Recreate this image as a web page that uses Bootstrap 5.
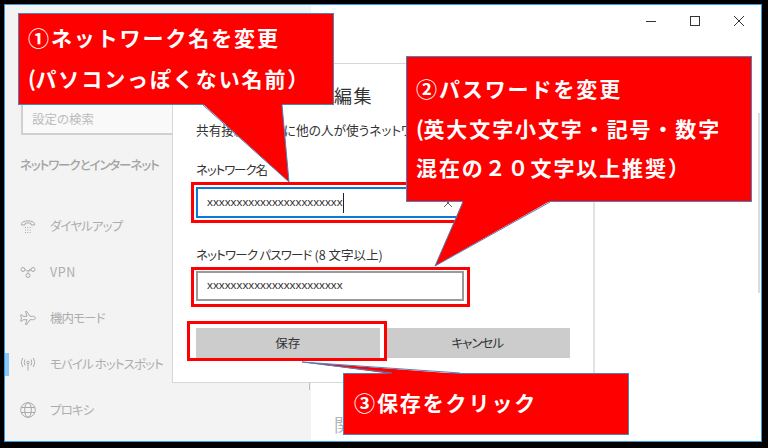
<!DOCTYPE html>
<html lang="ja">
<head>
<meta charset="utf-8">
<title>ネットワーク情報の編集</title>
<link href="https://cdn.jsdelivr.net/npm/bootstrap@5.3.0/dist/css/bootstrap.min.css" rel="stylesheet">
<style>
html,body{margin:0;background:#000;overflow:hidden}
body{font-family:"Noto Sans CJK JP","Liberation Sans",sans-serif;font-feature-settings:"palt";width:768px;height:448px}
.stage{position:relative;width:768px;height:448px;background:#000;overflow:hidden;padding:4px 6px 6px 4px}
.appwin{position:relative;width:758px;height:438px;border:1px solid #3d9be6;background:#fff;display:flex}
.side{width:306px;background:#f3f3f3;padding-top:98px;color:#adadad;font-size:12.5px}
.searchbox{margin-left:16px;width:200px;height:32px;border:2px solid #d0d0d0;background:#f9f9f9;padding-left:9px;line-height:28px;color:#bcbcbc}
.sidehead{margin:21px 0 29px 15px;line-height:18px;color:#a3a3a3;font-weight:500;letter-spacing:-1.1px}
.siderow{height:46px;display:flex;align-items:center;letter-spacing:-.9px}
.latin{letter-spacing:.6px}
.rail{width:4px;height:23px;margin-right:11px;flex:none}
.rail.on{background:#8cc6f7}
.sico{width:16px;height:16px;margin-right:14px;flex:none;fill:none;stroke:#a9a9a9;stroke-width:1}
.mainpane{flex:1;display:flex;flex-direction:column;min-width:0}
.wctl{display:flex;justify-content:flex-end}
.wbtn{width:44px;height:32px;display:flex;align-items:center;justify-content:center}
.wbtn svg{width:12px;height:12px;fill:none;stroke:#333;stroke-width:1}
.relhead{margin:auto 0 0 23px;padding-bottom:4px;font-size:18px;line-height:26px;color:#b5b5b5}
.vbar{position:absolute;left:753px;top:108px;width:2px;height:180px;background:#dcdcdc}
.sidetick{position:absolute;left:304px;top:374px;width:1px;height:11px;background:#bdbdbd}
.dlg{position:absolute;left:167px;top:58px;width:423px;height:320px;background:#fff;border:1px solid #d8d8d8;border-right:2px solid #e2e2e2;padding:17px 23px 0;color:#333}
.dlgtitle{font-size:18px;line-height:28px;white-space:nowrap;font-feature-settings:normal;letter-spacing:1.7px}
.dlgdesc{font-size:12.7px;line-height:18px;margin-top:12px;white-space:nowrap;overflow:hidden}
.dlglabel{font-size:12.5px;line-height:18px;color:#333}
.lb1{margin-top:22px;letter-spacing:-1.1px}
.lb2{margin-top:28px}
.narrowkana{letter-spacing:-.8px}
.fieldbox{width:268px;display:flex;align-items:center;padding:0 9px;background:#fff;font-family:"Liberation Sans",sans-serif;font-size:11.8px;color:#333}
.fb1{height:31px;margin-top:8px;border:2px solid #0a7ad6}
.fb2{height:30px;margin-top:7px;border:2px solid #9a9a9a}
.caretline{width:1px;height:20px;background:#222;flex:none}
.clearx{margin-left:auto;width:10px;height:10px;fill:none;stroke:#666;stroke-width:1;flex:none}
.btnrow{display:flex;gap:5px;margin-top:27px}
.dbtn{height:30px;background:#ccc;color:#333;font-size:12.5px;display:flex;align-items:center;justify-content:center}
.db1{width:184px}
.db2{width:186px;letter-spacing:-1px}
.redbox{position:absolute;border:3px solid #f00;background:transparent}
.callout{position:absolute;background:#f00;border:1px solid #4f81bd;color:#fff;font-weight:700;font-size:21px;letter-spacing:1.9px;white-space:nowrap;font-feature-settings:normal}
.callout svg{position:absolute;left:0;top:0;overflow:visible;width:1px;height:1px}
.callout .tf{fill:#f00;stroke:none}
.callout .ts{fill:none;stroke:#4f81bd;stroke-width:1}
.ctext{position:relative}
.paren{letter-spacing:-.5px;font-feature-settings:"palt"}
.c1{left:18px;top:13px;width:316px;height:92px;padding:3px 0 0 9px;line-height:41px}
.c2{left:406px;top:56px;width:346px;height:146px;padding:12px 0 0 9px;line-height:39.5px}
.c3{left:343px;top:373px;width:286px;height:62px;padding:8px 0 0 10px;line-height:40px}
</style>
</head>
<body>
<div class="stage">
  <div class="appwin">
    <aside class="side">
      <div class="searchbox">設定の検索</div>
      <div class="sidehead">ネットワークとインターネット</div>
      <div class="siderow"><span class="rail"></span>
        <svg class="sico" viewBox="0 0 16 16"><path d="M1.5 7V5.5C2.5 2 13.500 2 14.500 5.500V7H11V5.500C9.500 4.700 6.500 4.700 5 5.500V7Z"/><path stroke-dasharray="1 1.300" d="M5 9.500H11M5 12H11M5 14.500H11"/></svg>
        <span>ダイヤルアップ</span></div>
      <div class="siderow"><span class="rail"></span>
        <svg class="sico" viewBox="0 0 16 16"><circle cx="3" cy="5.500" r="2"/><circle cx="13" cy="5.500" r="2"/><circle cx="8" cy="11.500" r="2"/><path d="M5 5.500C7 7.500 9 7.500 11 5.500M8 9.500C8 8 9 7 10 5"/></svg>
        <span class="latin">VPN</span></div>
      <div class="siderow"><span class="rail"></span>
        <svg class="sico" viewBox="0 0 16 16"><path d="M15.500 8C15.500 7 14 6.300 12.500 6.300H10L6.800 1.500H5.500L7 6.300H3L1.800 4.800H.7L1.400 8L.7 11.200H1.800L3 9.700H7L5.500 14.500H6.800L10 9.700H12.500C14 9.700 15.500 9 15.500 8Z"/></svg>
        <span>機内モード</span></div>
      <div class="siderow"><span class="rail on"></span>
        <svg class="sico" viewBox="0 0 16 16"><circle cx="8" cy="6.500" r="1.300"/><path d="M8 8V14.500M5.200 3.500C4 5.500 4 7.500 5.200 9.500M10.800 3.500C12 5.500 12 7.500 10.800 9.500M2.800 2C1 5 1 8 2.800 11M13.200 2C15 5 15 8 13.200 11"/></svg>
        <span>モバイル ホットスポット</span></div>
      <div class="siderow"><span class="rail"></span>
        <svg class="sico" viewBox="0 0 16 16"><circle cx="8" cy="8" r="7.300"/><ellipse cx="8" cy="8" rx="3.300" ry="7.300"/><path d="M1.200 5.500H14.800M1.200 10.500H14.800"/></svg>
        <span>プロキシ</span></div>
    </aside>
    <main class="mainpane">
      <div class="wctl">
        <div class="wbtn"><svg viewBox="0 0 12 12"><path d="M1 6.500H11"/></svg></div>
        <div class="wbtn"><svg viewBox="0 0 12 12"><rect x="1.500" y="1.500" width="9" height="9"/></svg></div>
        <div class="wbtn"><svg viewBox="0 0 12 12"><path d="M1 1L11 11M11 1L1 11"/></svg></div>
      </div>
      <div class="relhead">関連設定</div>
    </main>
    <div class="vbar"></div>
    <div class="sidetick"></div>
    <section class="dlg">
      <div class="dlgtitle">ネットワークの編集</div>
      <div class="dlgdesc">共有接続のために他の人が使うネットワーク</div>
      <div class="dlglabel lb1">ネットワーク名</div>
      <div class="fieldbox fb1"><span>xxxxxxxxxxxxxxxxxxxxxxx</span><span class="caretline"></span>
        <svg class="clearx" viewBox="0 0 10 10"><path d="M1 1L9 9M9 1L1 9"/></svg></div>
      <div class="dlglabel lb2"><span class="narrowkana">ネットワーク パスワード</span> (8 文字以上)</div>
      <div class="fieldbox fb2"><span>xxxxxxxxxxxxxxxxxxxxxxx</span></div>
      <div class="btnrow">
        <div class="dbtn db1">保存</div>
        <div class="dbtn db2">キャンセル</div>
      </div>
    </section>
  </div>

  <div class="redbox" style="left:191px;top:182px;width:279px;height:41px"></div>
  <div class="redbox" style="left:191px;top:267px;width:279px;height:40px"></div>
  <div class="redbox" style="left:187px;top:321px;width:200px;height:40px"></div>

  <div class="callout c1">
    <svg><polygon class="tf" points="184,90 263,90 270,168"/><polyline class="ts" points="184,91 270,168 263,91"/></svg>
    <div class="ctext">①ネットワーク名を変更<br><span class="paren">(</span>パソコンっぽくない名前）</div>
  </div>
  <div class="callout c2">
    <svg><polygon class="tf" points="56,144 143,144 28,209"/><polyline class="ts" points="56,145 28,209 143,145"/></svg>
    <div class="ctext">②パスワードを変更<br><span class="paren">(</span>英大文字小文字・記号・数字<br>混在の２０文字以上推奨）</div>
  </div>
  <div class="callout c3">
    <svg><polygon class="tf" points="48,0 116,0 -42,-12"/><polyline class="ts" points="48,-1 -42,-12 116,-1"/></svg>
    <div class="ctext">③保存をクリック</div>
  </div>
</div>
<script src="https://cdn.jsdelivr.net/npm/bootstrap@5.3.0/dist/js/bootstrap.bundle.min.js"></script>
</body>
</html>
